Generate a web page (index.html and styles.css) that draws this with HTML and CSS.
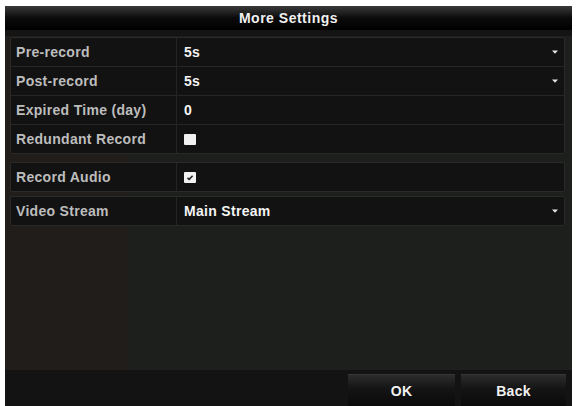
FILE: index.html
```html
<!DOCTYPE html>
<html>
<head>
<meta charset="utf-8">
<link rel="stylesheet" href="styles.css">
</head>
<body>
<div class="window">
  <div class="titlebar">More Settings</div>
  <div class="content">
    <div class="group">
      <div class="row">
        <div class="label">Pre-record</div>
        <div class="value">5s</div>
        <svg class="arrow" width="6" height="4" viewBox="0 0 6 4"><path d="M0 0.5 L6 0.5 L3 3.8 Z" fill="#e6e6e6"/></svg>
      </div>
      <div class="row">
        <div class="label">Post-record</div>
        <div class="value">5s</div>
        <svg class="arrow" width="6" height="4" viewBox="0 0 6 4"><path d="M0 0.5 L6 0.5 L3 3.8 Z" fill="#e6e6e6"/></svg>
      </div>
      <div class="row">
        <div class="label">Expired Time (day)</div>
        <div class="value">0</div>
      </div>
      <div class="row">
        <div class="label">Redundant Record</div>
        <div class="value"><span class="check"></span></div>
      </div>
    </div>
    <div class="group group-sep">
      <div class="row">
        <div class="label">Record Audio</div>
        <div class="value"><span class="check"><svg width="12" height="11" viewBox="0 0 12 11"><path d="M3.5 5.8 L5.2 7.3 L8.6 3.8" stroke="#222" stroke-width="1.6" fill="none"/></svg></span></div>
      </div>
    </div>
    <div class="group group-gap">
      <div class="row">
        <div class="label">Video Stream</div>
        <div class="value">Main Stream</div>
        <svg class="arrow" width="6" height="4" viewBox="0 0 6 4"><path d="M0 0.5 L6 0.5 L3 3.8 Z" fill="#e6e6e6"/></svg>
      </div>
    </div>
  </div>
  <div class="footer">
    <div class="btn btn-ok">OK</div>
    <div class="btn btn-back">Back</div>
  </div>
</div>
</body>
</html>
```
FILE: styles.css
```css
html, body {
  margin: 0;
  padding: 0;
  background: #ffffff;
}
body {
  font-family: "Liberation Sans", Arial, sans-serif;
  font-weight: bold;
  font-size: 14px;
}
.window {
  margin: 6px 4px 0 5px;
  height: 400px;
  display: flex;
  flex-direction: column;
  background: #1c1e1b;
  overflow: hidden;
}
.titlebar {
  height: 24px;
  line-height: 25px;
  text-align: center;
  color: #f0f0f0;
  letter-spacing: 0.5px;
  background: linear-gradient(#3a3a3a 0%, #0b0b0b 50%, #000000 100%);
  flex: none;
}
.content {
  flex: 1;
  padding: 7px 7px 0 5px;
  background: linear-gradient(90deg, #211d1a 0, #211d1a 123px, #1c1f1c 123px, #1c1f1c 100%);
  box-shadow: inset 0 146px 0 -140px #141414;
}
.group {
  border: 1px solid #2a2a2a;
  border-radius: 2px;
  background: #121212;
}
.group-sep {
  margin-top: 8px;
}
.group-gap {
  margin-top: 4px;
}
.row {
  display: flex;
  align-items: center;
  height: 28px;
  border-bottom: 1px solid #262626;
}
.row:last-child {
  border-bottom: none;
}
.label {
  width: 160px;
  padding-left: 5px;
  height: 100%;
  line-height: 29px;
  color: #bdbdbd;
  letter-spacing: 0.3px;
  border-right: 1px solid #242424;
  flex: none;
}
.value {
  flex: 1;
  padding-left: 7px;
  color: #f4f4f4;
  letter-spacing: 0.3px;
  display: flex;
  align-items: center;
}
.arrow {
  margin-right: 6px;
  flex: none;
}
.check {
  display: inline-block;
  width: 12px;
  height: 11px;
  background: #f2f2f2;
  border-radius: 1px;
}
.check svg {
  display: block;
}
.footer {
  height: 36px;
  flex: none;
  background: #131313;
  display: flex;
  justify-content: flex-end;
  align-items: flex-end;
  gap: 6px;
  padding-right: 6px;
}
.btn {
  height: 32px;
  line-height: 32px;
  text-align: center;
  color: #f2f2f2;
  letter-spacing: 0.3px;
  background: linear-gradient(#2c2c2c 0%, #141414 45%, #0a0a0a 100%);
  border-top: 1px solid #363636;
  box-sizing: border-box;
}
.btn-ok {
  width: 107px;
}
.btn-back {
  width: 105px;
}
```
